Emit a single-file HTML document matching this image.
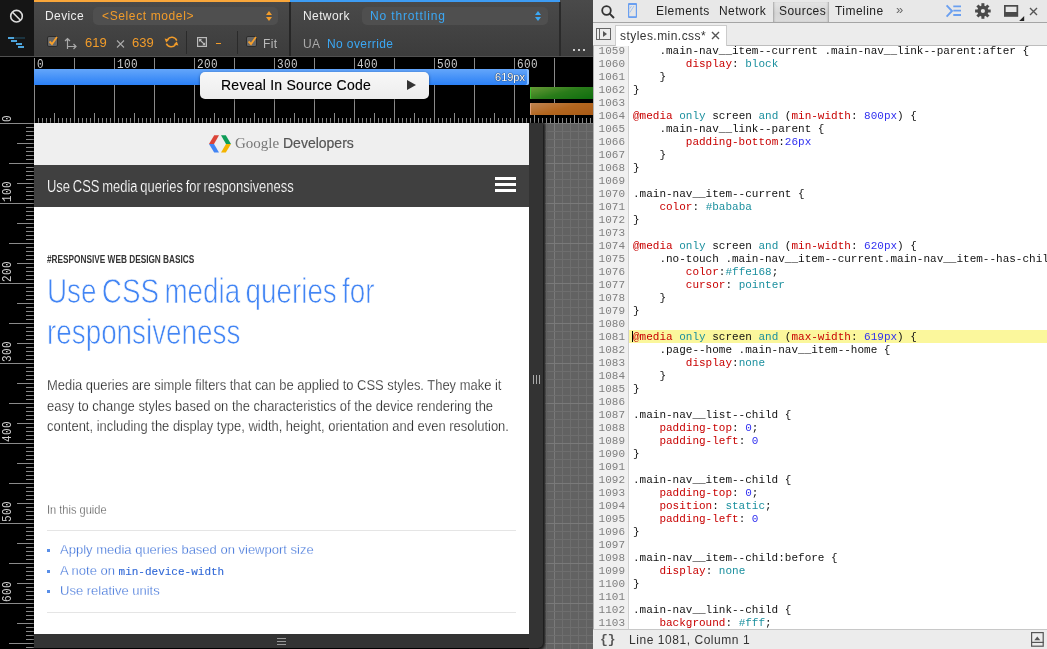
<!DOCTYPE html><html><head><meta charset="utf-8"><style>
*{box-sizing:border-box}
html,body{margin:0;padding:0}
body{width:1047px;height:649px;overflow:hidden;position:relative;background:#000;font-family:"Liberation Sans",sans-serif}
.ab{position:absolute}
.mono{font-family:"Liberation Mono",monospace}
.code{position:absolute;left:633px;font-family:"Liberation Mono",monospace;font-size:11px;line-height:13px;white-space:pre;color:#111}
.ln{position:absolute;left:593px;width:32px;text-align:right;font-family:"Liberation Mono",monospace;font-size:11px;line-height:13px;color:#7f7f7f}
.r{color:#c80000}.t{color:#1a8f9e}.b{color:#2f2ff0}
</style></head><body><div id="root" style="position:absolute;left:0;top:0;width:1047px;height:649px;will-change:transform">

<div class="ab" style="left:0;top:0;width:34px;height:56px;background:#151515"></div>
<div class="ab" style="left:34px;top:0;width:559px;height:56px;background:linear-gradient(#4a4a4a,#3c3c3c)"></div>
<div class="ab" style="left:34px;top:0;width:256px;height:2px;background:#f9a63a"></div>
<div class="ab" style="left:290px;top:0;width:270px;height:2px;background:#3d9cf4"></div>
<div class="ab" style="left:0;top:56px;width:593px;height:1px;background:#505050"></div>
<div class="ab" style="left:289px;top:2px;width:2px;height:54px;background:#262626"></div>
<div class="ab" style="left:559px;top:2px;width:2px;height:54px;background:#2a2a2a"></div>
<div class="ab" style="left:186px;top:31px;width:1px;height:23px;background:#2a2a2a"></div>
<div class="ab" style="left:237px;top:31px;width:1px;height:23px;background:#2a2a2a"></div>
<svg class="ab" style="left:0;top:0" width="34" height="56"><circle cx="16.5" cy="16.2" r="5.8" fill="none" stroke="#ddd" stroke-width="1.6"/><line x1="12.5" y1="12.2" x2="20.5" y2="20.2" stroke="#ddd" stroke-width="1.6"/><rect x="8" y="37" width="6" height="2" fill="#4ea5dc"/><rect x="14" y="37" width="11" height="2" fill="#1c3440"/><rect x="11" y="40" width="6" height="2" fill="#4ea5dc"/><rect x="16" y="43" width="6" height="2" fill="#4ea5dc"/><rect x="18" y="46" width="6" height="2" fill="#4ea5dc"/></svg>
<div class="ab" style="left:45px;top:9px;font-size:12px;line-height:14px;letter-spacing:0.4px;color:#eee">Device</div>
<div class="ab" style="left:93px;top:7px;width:185px;height:18px;border-radius:5px;background:#4f4f4f"></div>
<div class="ab" style="left:102px;top:9px;font-size:12px;line-height:14px;letter-spacing:0.4px;letter-spacing:0.62px;color:#f29c2a">&lt;Select model&gt;</div>
<svg class="ab" style="left:266px;top:11px" width="6" height="11"><path d="M3 0L6 4H0Z M0 6H6L3 10Z" fill="#f29c2a"/></svg>
<div class="ab" style="left:303px;top:9px;font-size:12px;line-height:14px;letter-spacing:0.4px;color:#eee">Network</div>
<div class="ab" style="left:362px;top:7px;width:186px;height:18px;border-radius:5px;background:#4f4f4f"></div>
<div class="ab" style="left:370px;top:9px;font-size:12px;line-height:14px;letter-spacing:0.4px;letter-spacing:0.85px;color:#3ba8f5">No throttling</div>
<svg class="ab" style="left:535px;top:11px" width="6" height="11"><path d="M3 0L6 4H0Z M0 6H6L3 10Z" fill="#3ba8f5"/></svg>
<div class="ab" style="left:303px;top:37px;font-size:12px;line-height:14px;letter-spacing:0.4px;color:#aaa">UA</div>
<div class="ab" style="left:327px;top:37px;font-size:12px;line-height:14px;letter-spacing:0.4px;color:#3ba8f5">No override</div>
<div class="ab" style="left:573px;top:49px;width:2px;height:1.5px;background:#ccc;box-shadow:5px 0 0 #ccc,10px 0 0 #ccc"></div>
<div class="ab" style="left:47px;top:36px;width:11px;height:11px;border-radius:2px;background:#666;border:1px solid #2c2c2c"></div>
<svg class="ab" style="left:47px;top:35px" width="12" height="12"><path d="M2.5 6.5L5 9L10 2" fill="none" stroke="#f7a02c" stroke-width="1.8"/></svg>
<svg class="ab" style="left:64px;top:37px" width="13" height="13"><path d="M3.5 12V1.5M1 4L3.5 1.5L6 4M3.5 9.5H12M9.5 7L12 9.5L9.5 12" fill="none" stroke="#aaa" stroke-width="1.2"/></svg>
<div class="ab" style="left:85px;top:35px;font-size:13px;line-height:15px;color:#f29c2a">619</div>
<svg class="ab" style="left:116px;top:40px" width="9" height="8"><path d="M1 0.5L8 7.5M8 0.5L1 7.5" stroke="#aaa" stroke-width="1.1"/></svg>
<div class="ab" style="left:132px;top:35px;font-size:13px;line-height:15px;color:#f29c2a">639</div>
<svg class="ab" style="left:160px;top:32px" width="24" height="20"><path d="M16.8 8.6A5.4 5.4 0 0 0 7.4 7.6M6.4 11.6A5.4 5.4 0 0 0 15.8 12.4" fill="none" stroke="#f29c2a" stroke-width="1.5"/><path d="M4.6 6.6L9.4 7.4L6.2 10.6Z M18.4 13.4L13.6 12.6L16.8 9.4Z" fill="#f29c2a"/></svg>
<svg class="ab" style="left:197px;top:37px" width="10" height="10"><rect x="0.6" y="0.6" width="8.8" height="8.8" fill="none" stroke="#bbb" stroke-width="1.2"/><path d="M2 2H5L2 5Z M8.2 8.2H5.2L8.2 5.2Z" fill="#bbb"/><path d="M3 3L7.2 7.2" stroke="#bbb" stroke-width="1.2"/></svg>
<div class="ab" style="left:216px;top:43px;width:5px;height:1px;background:#f29c2a"></div>
<div class="ab" style="left:246px;top:36px;width:11px;height:11px;border-radius:2px;background:#666;border:1px solid #2c2c2c"></div>
<svg class="ab" style="left:246px;top:35px" width="12" height="12"><path d="M2.5 6.5L5 9L10 2" fill="none" stroke="#f7a02c" stroke-width="1.8"/></svg>
<div class="ab" style="left:263px;top:37px;font-size:12px;line-height:14px;letter-spacing:0.4px;color:#bbb">Fit</div>
<svg class="ab" style="left:0;top:0" width="593" height="649" shape-rendering="crispEdges"><line x1="34.5" y1="58" x2="34.5" y2="123" stroke="#8a8a8a"/><line x1="38.5" y1="118" x2="38.5" y2="123" stroke="#8a8a8a"/><line x1="42.5" y1="118" x2="42.5" y2="123" stroke="#8a8a8a"/><line x1="46.5" y1="118" x2="46.5" y2="123" stroke="#8a8a8a"/><line x1="50.5" y1="118" x2="50.5" y2="123" stroke="#8a8a8a"/><line x1="54.5" y1="113" x2="54.5" y2="123" stroke="#8a8a8a"/><line x1="58.5" y1="118" x2="58.5" y2="123" stroke="#8a8a8a"/><line x1="62.5" y1="118" x2="62.5" y2="123" stroke="#8a8a8a"/><line x1="66.5" y1="118" x2="66.5" y2="123" stroke="#8a8a8a"/><line x1="70.5" y1="118" x2="70.5" y2="123" stroke="#8a8a8a"/><line x1="74.5" y1="58" x2="74.5" y2="123" stroke="#8a8a8a"/><line x1="78.5" y1="118" x2="78.5" y2="123" stroke="#8a8a8a"/><line x1="82.5" y1="118" x2="82.5" y2="123" stroke="#8a8a8a"/><line x1="86.5" y1="118" x2="86.5" y2="123" stroke="#8a8a8a"/><line x1="90.5" y1="118" x2="90.5" y2="123" stroke="#8a8a8a"/><line x1="94.5" y1="113" x2="94.5" y2="123" stroke="#8a8a8a"/><line x1="98.5" y1="118" x2="98.5" y2="123" stroke="#8a8a8a"/><line x1="102.5" y1="118" x2="102.5" y2="123" stroke="#8a8a8a"/><line x1="106.5" y1="118" x2="106.5" y2="123" stroke="#8a8a8a"/><line x1="110.5" y1="118" x2="110.5" y2="123" stroke="#8a8a8a"/><line x1="114.5" y1="58" x2="114.5" y2="123" stroke="#8a8a8a"/><line x1="118.5" y1="118" x2="118.5" y2="123" stroke="#8a8a8a"/><line x1="122.5" y1="118" x2="122.5" y2="123" stroke="#8a8a8a"/><line x1="126.5" y1="118" x2="126.5" y2="123" stroke="#8a8a8a"/><line x1="130.5" y1="118" x2="130.5" y2="123" stroke="#8a8a8a"/><line x1="134.5" y1="113" x2="134.5" y2="123" stroke="#8a8a8a"/><line x1="138.5" y1="118" x2="138.5" y2="123" stroke="#8a8a8a"/><line x1="142.5" y1="118" x2="142.5" y2="123" stroke="#8a8a8a"/><line x1="146.5" y1="118" x2="146.5" y2="123" stroke="#8a8a8a"/><line x1="150.5" y1="118" x2="150.5" y2="123" stroke="#8a8a8a"/><line x1="154.5" y1="58" x2="154.5" y2="123" stroke="#8a8a8a"/><line x1="158.5" y1="118" x2="158.5" y2="123" stroke="#8a8a8a"/><line x1="162.5" y1="118" x2="162.5" y2="123" stroke="#8a8a8a"/><line x1="166.5" y1="118" x2="166.5" y2="123" stroke="#8a8a8a"/><line x1="170.5" y1="118" x2="170.5" y2="123" stroke="#8a8a8a"/><line x1="174.5" y1="113" x2="174.5" y2="123" stroke="#8a8a8a"/><line x1="178.5" y1="118" x2="178.5" y2="123" stroke="#8a8a8a"/><line x1="182.5" y1="118" x2="182.5" y2="123" stroke="#8a8a8a"/><line x1="186.5" y1="118" x2="186.5" y2="123" stroke="#8a8a8a"/><line x1="190.5" y1="118" x2="190.5" y2="123" stroke="#8a8a8a"/><line x1="194.5" y1="58" x2="194.5" y2="123" stroke="#8a8a8a"/><line x1="198.5" y1="118" x2="198.5" y2="123" stroke="#8a8a8a"/><line x1="202.5" y1="118" x2="202.5" y2="123" stroke="#8a8a8a"/><line x1="206.5" y1="118" x2="206.5" y2="123" stroke="#8a8a8a"/><line x1="210.5" y1="118" x2="210.5" y2="123" stroke="#8a8a8a"/><line x1="214.5" y1="113" x2="214.5" y2="123" stroke="#8a8a8a"/><line x1="218.5" y1="118" x2="218.5" y2="123" stroke="#8a8a8a"/><line x1="222.5" y1="118" x2="222.5" y2="123" stroke="#8a8a8a"/><line x1="226.5" y1="118" x2="226.5" y2="123" stroke="#8a8a8a"/><line x1="230.5" y1="118" x2="230.5" y2="123" stroke="#8a8a8a"/><line x1="234.5" y1="58" x2="234.5" y2="123" stroke="#8a8a8a"/><line x1="238.5" y1="118" x2="238.5" y2="123" stroke="#8a8a8a"/><line x1="242.5" y1="118" x2="242.5" y2="123" stroke="#8a8a8a"/><line x1="246.5" y1="118" x2="246.5" y2="123" stroke="#8a8a8a"/><line x1="250.5" y1="118" x2="250.5" y2="123" stroke="#8a8a8a"/><line x1="254.5" y1="113" x2="254.5" y2="123" stroke="#8a8a8a"/><line x1="258.5" y1="118" x2="258.5" y2="123" stroke="#8a8a8a"/><line x1="262.5" y1="118" x2="262.5" y2="123" stroke="#8a8a8a"/><line x1="266.5" y1="118" x2="266.5" y2="123" stroke="#8a8a8a"/><line x1="270.5" y1="118" x2="270.5" y2="123" stroke="#8a8a8a"/><line x1="274.5" y1="58" x2="274.5" y2="123" stroke="#8a8a8a"/><line x1="278.5" y1="118" x2="278.5" y2="123" stroke="#8a8a8a"/><line x1="282.5" y1="118" x2="282.5" y2="123" stroke="#8a8a8a"/><line x1="286.5" y1="118" x2="286.5" y2="123" stroke="#8a8a8a"/><line x1="290.5" y1="118" x2="290.5" y2="123" stroke="#8a8a8a"/><line x1="294.5" y1="113" x2="294.5" y2="123" stroke="#8a8a8a"/><line x1="298.5" y1="118" x2="298.5" y2="123" stroke="#8a8a8a"/><line x1="302.5" y1="118" x2="302.5" y2="123" stroke="#8a8a8a"/><line x1="306.5" y1="118" x2="306.5" y2="123" stroke="#8a8a8a"/><line x1="310.5" y1="118" x2="310.5" y2="123" stroke="#8a8a8a"/><line x1="314.5" y1="58" x2="314.5" y2="123" stroke="#8a8a8a"/><line x1="318.5" y1="118" x2="318.5" y2="123" stroke="#8a8a8a"/><line x1="322.5" y1="118" x2="322.5" y2="123" stroke="#8a8a8a"/><line x1="326.5" y1="118" x2="326.5" y2="123" stroke="#8a8a8a"/><line x1="330.5" y1="118" x2="330.5" y2="123" stroke="#8a8a8a"/><line x1="334.5" y1="113" x2="334.5" y2="123" stroke="#8a8a8a"/><line x1="338.5" y1="118" x2="338.5" y2="123" stroke="#8a8a8a"/><line x1="342.5" y1="118" x2="342.5" y2="123" stroke="#8a8a8a"/><line x1="346.5" y1="118" x2="346.5" y2="123" stroke="#8a8a8a"/><line x1="350.5" y1="118" x2="350.5" y2="123" stroke="#8a8a8a"/><line x1="354.5" y1="58" x2="354.5" y2="123" stroke="#8a8a8a"/><line x1="358.5" y1="118" x2="358.5" y2="123" stroke="#8a8a8a"/><line x1="362.5" y1="118" x2="362.5" y2="123" stroke="#8a8a8a"/><line x1="366.5" y1="118" x2="366.5" y2="123" stroke="#8a8a8a"/><line x1="370.5" y1="118" x2="370.5" y2="123" stroke="#8a8a8a"/><line x1="374.5" y1="113" x2="374.5" y2="123" stroke="#8a8a8a"/><line x1="378.5" y1="118" x2="378.5" y2="123" stroke="#8a8a8a"/><line x1="382.5" y1="118" x2="382.5" y2="123" stroke="#8a8a8a"/><line x1="386.5" y1="118" x2="386.5" y2="123" stroke="#8a8a8a"/><line x1="390.5" y1="118" x2="390.5" y2="123" stroke="#8a8a8a"/><line x1="394.5" y1="58" x2="394.5" y2="123" stroke="#8a8a8a"/><line x1="398.5" y1="118" x2="398.5" y2="123" stroke="#8a8a8a"/><line x1="402.5" y1="118" x2="402.5" y2="123" stroke="#8a8a8a"/><line x1="406.5" y1="118" x2="406.5" y2="123" stroke="#8a8a8a"/><line x1="410.5" y1="118" x2="410.5" y2="123" stroke="#8a8a8a"/><line x1="414.5" y1="113" x2="414.5" y2="123" stroke="#8a8a8a"/><line x1="418.5" y1="118" x2="418.5" y2="123" stroke="#8a8a8a"/><line x1="422.5" y1="118" x2="422.5" y2="123" stroke="#8a8a8a"/><line x1="426.5" y1="118" x2="426.5" y2="123" stroke="#8a8a8a"/><line x1="430.5" y1="118" x2="430.5" y2="123" stroke="#8a8a8a"/><line x1="434.5" y1="58" x2="434.5" y2="123" stroke="#8a8a8a"/><line x1="438.5" y1="118" x2="438.5" y2="123" stroke="#8a8a8a"/><line x1="442.5" y1="118" x2="442.5" y2="123" stroke="#8a8a8a"/><line x1="446.5" y1="118" x2="446.5" y2="123" stroke="#8a8a8a"/><line x1="450.5" y1="118" x2="450.5" y2="123" stroke="#8a8a8a"/><line x1="454.5" y1="113" x2="454.5" y2="123" stroke="#8a8a8a"/><line x1="458.5" y1="118" x2="458.5" y2="123" stroke="#8a8a8a"/><line x1="462.5" y1="118" x2="462.5" y2="123" stroke="#8a8a8a"/><line x1="466.5" y1="118" x2="466.5" y2="123" stroke="#8a8a8a"/><line x1="470.5" y1="118" x2="470.5" y2="123" stroke="#8a8a8a"/><line x1="474.5" y1="58" x2="474.5" y2="123" stroke="#8a8a8a"/><line x1="478.5" y1="118" x2="478.5" y2="123" stroke="#8a8a8a"/><line x1="482.5" y1="118" x2="482.5" y2="123" stroke="#8a8a8a"/><line x1="486.5" y1="118" x2="486.5" y2="123" stroke="#8a8a8a"/><line x1="490.5" y1="118" x2="490.5" y2="123" stroke="#8a8a8a"/><line x1="494.5" y1="113" x2="494.5" y2="123" stroke="#8a8a8a"/><line x1="498.5" y1="118" x2="498.5" y2="123" stroke="#8a8a8a"/><line x1="502.5" y1="118" x2="502.5" y2="123" stroke="#8a8a8a"/><line x1="506.5" y1="118" x2="506.5" y2="123" stroke="#8a8a8a"/><line x1="510.5" y1="118" x2="510.5" y2="123" stroke="#8a8a8a"/><line x1="514.5" y1="58" x2="514.5" y2="123" stroke="#8a8a8a"/><line x1="518.5" y1="118" x2="518.5" y2="123" stroke="#8a8a8a"/><line x1="522.5" y1="118" x2="522.5" y2="123" stroke="#8a8a8a"/><line x1="526.5" y1="118" x2="526.5" y2="123" stroke="#8a8a8a"/><line x1="530.5" y1="118" x2="530.5" y2="123" stroke="#8a8a8a"/><line x1="534.5" y1="113" x2="534.5" y2="123" stroke="#8a8a8a"/><line x1="538.5" y1="118" x2="538.5" y2="123" stroke="#8a8a8a"/><line x1="542.5" y1="118" x2="542.5" y2="123" stroke="#8a8a8a"/><line x1="546.5" y1="118" x2="546.5" y2="123" stroke="#8a8a8a"/><line x1="550.5" y1="118" x2="550.5" y2="123" stroke="#8a8a8a"/><line x1="554.5" y1="58" x2="554.5" y2="123" stroke="#8a8a8a"/><line x1="558.5" y1="118" x2="558.5" y2="123" stroke="#8a8a8a"/><line x1="562.5" y1="118" x2="562.5" y2="123" stroke="#8a8a8a"/><line x1="566.5" y1="118" x2="566.5" y2="123" stroke="#8a8a8a"/><line x1="570.5" y1="118" x2="570.5" y2="123" stroke="#8a8a8a"/><line x1="574.5" y1="113" x2="574.5" y2="123" stroke="#8a8a8a"/><line x1="578.5" y1="118" x2="578.5" y2="123" stroke="#8a8a8a"/><line x1="582.5" y1="118" x2="582.5" y2="123" stroke="#8a8a8a"/><line x1="586.5" y1="118" x2="586.5" y2="123" stroke="#8a8a8a"/><line x1="590.5" y1="118" x2="590.5" y2="123" stroke="#8a8a8a"/><line x1="0" y1="123.5" x2="34" y2="123.5" stroke="#8a8a8a"/><line x1="26" y1="127.5" x2="34" y2="127.5" stroke="#8a8a8a"/><line x1="26" y1="131.5" x2="34" y2="131.5" stroke="#8a8a8a"/><line x1="26" y1="135.5" x2="34" y2="135.5" stroke="#8a8a8a"/><line x1="26" y1="139.5" x2="34" y2="139.5" stroke="#8a8a8a"/><line x1="17" y1="143.5" x2="34" y2="143.5" stroke="#8a8a8a"/><line x1="26" y1="147.5" x2="34" y2="147.5" stroke="#8a8a8a"/><line x1="26" y1="151.5" x2="34" y2="151.5" stroke="#8a8a8a"/><line x1="26" y1="155.5" x2="34" y2="155.5" stroke="#8a8a8a"/><line x1="26" y1="159.5" x2="34" y2="159.5" stroke="#8a8a8a"/><line x1="9" y1="163.5" x2="34" y2="163.5" stroke="#8a8a8a"/><line x1="26" y1="167.5" x2="34" y2="167.5" stroke="#8a8a8a"/><line x1="26" y1="171.5" x2="34" y2="171.5" stroke="#8a8a8a"/><line x1="26" y1="175.5" x2="34" y2="175.5" stroke="#8a8a8a"/><line x1="26" y1="179.5" x2="34" y2="179.5" stroke="#8a8a8a"/><line x1="17" y1="183.5" x2="34" y2="183.5" stroke="#8a8a8a"/><line x1="26" y1="187.5" x2="34" y2="187.5" stroke="#8a8a8a"/><line x1="26" y1="191.5" x2="34" y2="191.5" stroke="#8a8a8a"/><line x1="26" y1="195.5" x2="34" y2="195.5" stroke="#8a8a8a"/><line x1="26" y1="199.5" x2="34" y2="199.5" stroke="#8a8a8a"/><line x1="0" y1="203.5" x2="34" y2="203.5" stroke="#8a8a8a"/><line x1="26" y1="207.5" x2="34" y2="207.5" stroke="#8a8a8a"/><line x1="26" y1="211.5" x2="34" y2="211.5" stroke="#8a8a8a"/><line x1="26" y1="215.5" x2="34" y2="215.5" stroke="#8a8a8a"/><line x1="26" y1="219.5" x2="34" y2="219.5" stroke="#8a8a8a"/><line x1="17" y1="223.5" x2="34" y2="223.5" stroke="#8a8a8a"/><line x1="26" y1="227.5" x2="34" y2="227.5" stroke="#8a8a8a"/><line x1="26" y1="231.5" x2="34" y2="231.5" stroke="#8a8a8a"/><line x1="26" y1="235.5" x2="34" y2="235.5" stroke="#8a8a8a"/><line x1="26" y1="239.5" x2="34" y2="239.5" stroke="#8a8a8a"/><line x1="9" y1="243.5" x2="34" y2="243.5" stroke="#8a8a8a"/><line x1="26" y1="247.5" x2="34" y2="247.5" stroke="#8a8a8a"/><line x1="26" y1="251.5" x2="34" y2="251.5" stroke="#8a8a8a"/><line x1="26" y1="255.5" x2="34" y2="255.5" stroke="#8a8a8a"/><line x1="26" y1="259.5" x2="34" y2="259.5" stroke="#8a8a8a"/><line x1="17" y1="263.5" x2="34" y2="263.5" stroke="#8a8a8a"/><line x1="26" y1="267.5" x2="34" y2="267.5" stroke="#8a8a8a"/><line x1="26" y1="271.5" x2="34" y2="271.5" stroke="#8a8a8a"/><line x1="26" y1="275.5" x2="34" y2="275.5" stroke="#8a8a8a"/><line x1="26" y1="279.5" x2="34" y2="279.5" stroke="#8a8a8a"/><line x1="0" y1="283.5" x2="34" y2="283.5" stroke="#8a8a8a"/><line x1="26" y1="287.5" x2="34" y2="287.5" stroke="#8a8a8a"/><line x1="26" y1="291.5" x2="34" y2="291.5" stroke="#8a8a8a"/><line x1="26" y1="295.5" x2="34" y2="295.5" stroke="#8a8a8a"/><line x1="26" y1="299.5" x2="34" y2="299.5" stroke="#8a8a8a"/><line x1="17" y1="303.5" x2="34" y2="303.5" stroke="#8a8a8a"/><line x1="26" y1="307.5" x2="34" y2="307.5" stroke="#8a8a8a"/><line x1="26" y1="311.5" x2="34" y2="311.5" stroke="#8a8a8a"/><line x1="26" y1="315.5" x2="34" y2="315.5" stroke="#8a8a8a"/><line x1="26" y1="319.5" x2="34" y2="319.5" stroke="#8a8a8a"/><line x1="9" y1="323.5" x2="34" y2="323.5" stroke="#8a8a8a"/><line x1="26" y1="327.5" x2="34" y2="327.5" stroke="#8a8a8a"/><line x1="26" y1="331.5" x2="34" y2="331.5" stroke="#8a8a8a"/><line x1="26" y1="335.5" x2="34" y2="335.5" stroke="#8a8a8a"/><line x1="26" y1="339.5" x2="34" y2="339.5" stroke="#8a8a8a"/><line x1="17" y1="343.5" x2="34" y2="343.5" stroke="#8a8a8a"/><line x1="26" y1="347.5" x2="34" y2="347.5" stroke="#8a8a8a"/><line x1="26" y1="351.5" x2="34" y2="351.5" stroke="#8a8a8a"/><line x1="26" y1="355.5" x2="34" y2="355.5" stroke="#8a8a8a"/><line x1="26" y1="359.5" x2="34" y2="359.5" stroke="#8a8a8a"/><line x1="0" y1="363.5" x2="34" y2="363.5" stroke="#8a8a8a"/><line x1="26" y1="367.5" x2="34" y2="367.5" stroke="#8a8a8a"/><line x1="26" y1="371.5" x2="34" y2="371.5" stroke="#8a8a8a"/><line x1="26" y1="375.5" x2="34" y2="375.5" stroke="#8a8a8a"/><line x1="26" y1="379.5" x2="34" y2="379.5" stroke="#8a8a8a"/><line x1="17" y1="383.5" x2="34" y2="383.5" stroke="#8a8a8a"/><line x1="26" y1="387.5" x2="34" y2="387.5" stroke="#8a8a8a"/><line x1="26" y1="391.5" x2="34" y2="391.5" stroke="#8a8a8a"/><line x1="26" y1="395.5" x2="34" y2="395.5" stroke="#8a8a8a"/><line x1="26" y1="399.5" x2="34" y2="399.5" stroke="#8a8a8a"/><line x1="9" y1="403.5" x2="34" y2="403.5" stroke="#8a8a8a"/><line x1="26" y1="407.5" x2="34" y2="407.5" stroke="#8a8a8a"/><line x1="26" y1="411.5" x2="34" y2="411.5" stroke="#8a8a8a"/><line x1="26" y1="415.5" x2="34" y2="415.5" stroke="#8a8a8a"/><line x1="26" y1="419.5" x2="34" y2="419.5" stroke="#8a8a8a"/><line x1="17" y1="423.5" x2="34" y2="423.5" stroke="#8a8a8a"/><line x1="26" y1="427.5" x2="34" y2="427.5" stroke="#8a8a8a"/><line x1="26" y1="431.5" x2="34" y2="431.5" stroke="#8a8a8a"/><line x1="26" y1="435.5" x2="34" y2="435.5" stroke="#8a8a8a"/><line x1="26" y1="439.5" x2="34" y2="439.5" stroke="#8a8a8a"/><line x1="0" y1="443.5" x2="34" y2="443.5" stroke="#8a8a8a"/><line x1="26" y1="447.5" x2="34" y2="447.5" stroke="#8a8a8a"/><line x1="26" y1="451.5" x2="34" y2="451.5" stroke="#8a8a8a"/><line x1="26" y1="455.5" x2="34" y2="455.5" stroke="#8a8a8a"/><line x1="26" y1="459.5" x2="34" y2="459.5" stroke="#8a8a8a"/><line x1="17" y1="463.5" x2="34" y2="463.5" stroke="#8a8a8a"/><line x1="26" y1="467.5" x2="34" y2="467.5" stroke="#8a8a8a"/><line x1="26" y1="471.5" x2="34" y2="471.5" stroke="#8a8a8a"/><line x1="26" y1="475.5" x2="34" y2="475.5" stroke="#8a8a8a"/><line x1="26" y1="479.5" x2="34" y2="479.5" stroke="#8a8a8a"/><line x1="9" y1="483.5" x2="34" y2="483.5" stroke="#8a8a8a"/><line x1="26" y1="487.5" x2="34" y2="487.5" stroke="#8a8a8a"/><line x1="26" y1="491.5" x2="34" y2="491.5" stroke="#8a8a8a"/><line x1="26" y1="495.5" x2="34" y2="495.5" stroke="#8a8a8a"/><line x1="26" y1="499.5" x2="34" y2="499.5" stroke="#8a8a8a"/><line x1="17" y1="503.5" x2="34" y2="503.5" stroke="#8a8a8a"/><line x1="26" y1="507.5" x2="34" y2="507.5" stroke="#8a8a8a"/><line x1="26" y1="511.5" x2="34" y2="511.5" stroke="#8a8a8a"/><line x1="26" y1="515.5" x2="34" y2="515.5" stroke="#8a8a8a"/><line x1="26" y1="519.5" x2="34" y2="519.5" stroke="#8a8a8a"/><line x1="0" y1="523.5" x2="34" y2="523.5" stroke="#8a8a8a"/><line x1="26" y1="527.5" x2="34" y2="527.5" stroke="#8a8a8a"/><line x1="26" y1="531.5" x2="34" y2="531.5" stroke="#8a8a8a"/><line x1="26" y1="535.5" x2="34" y2="535.5" stroke="#8a8a8a"/><line x1="26" y1="539.5" x2="34" y2="539.5" stroke="#8a8a8a"/><line x1="17" y1="543.5" x2="34" y2="543.5" stroke="#8a8a8a"/><line x1="26" y1="547.5" x2="34" y2="547.5" stroke="#8a8a8a"/><line x1="26" y1="551.5" x2="34" y2="551.5" stroke="#8a8a8a"/><line x1="26" y1="555.5" x2="34" y2="555.5" stroke="#8a8a8a"/><line x1="26" y1="559.5" x2="34" y2="559.5" stroke="#8a8a8a"/><line x1="9" y1="563.5" x2="34" y2="563.5" stroke="#8a8a8a"/><line x1="26" y1="567.5" x2="34" y2="567.5" stroke="#8a8a8a"/><line x1="26" y1="571.5" x2="34" y2="571.5" stroke="#8a8a8a"/><line x1="26" y1="575.5" x2="34" y2="575.5" stroke="#8a8a8a"/><line x1="26" y1="579.5" x2="34" y2="579.5" stroke="#8a8a8a"/><line x1="17" y1="583.5" x2="34" y2="583.5" stroke="#8a8a8a"/><line x1="26" y1="587.5" x2="34" y2="587.5" stroke="#8a8a8a"/><line x1="26" y1="591.5" x2="34" y2="591.5" stroke="#8a8a8a"/><line x1="26" y1="595.5" x2="34" y2="595.5" stroke="#8a8a8a"/><line x1="26" y1="599.5" x2="34" y2="599.5" stroke="#8a8a8a"/><line x1="0" y1="603.5" x2="34" y2="603.5" stroke="#8a8a8a"/><line x1="26" y1="607.5" x2="34" y2="607.5" stroke="#8a8a8a"/><line x1="26" y1="611.5" x2="34" y2="611.5" stroke="#8a8a8a"/><line x1="26" y1="615.5" x2="34" y2="615.5" stroke="#8a8a8a"/><line x1="26" y1="619.5" x2="34" y2="619.5" stroke="#8a8a8a"/><line x1="17" y1="623.5" x2="34" y2="623.5" stroke="#8a8a8a"/><line x1="26" y1="627.5" x2="34" y2="627.5" stroke="#8a8a8a"/><line x1="26" y1="631.5" x2="34" y2="631.5" stroke="#8a8a8a"/><line x1="26" y1="635.5" x2="34" y2="635.5" stroke="#8a8a8a"/><line x1="26" y1="639.5" x2="34" y2="639.5" stroke="#8a8a8a"/><line x1="9" y1="643.5" x2="34" y2="643.5" stroke="#8a8a8a"/><line x1="26" y1="647.5" x2="34" y2="647.5" stroke="#8a8a8a"/></svg>
<div class="ab" style="left:37px;top:57px;font-family:'Liberation Mono',monospace;font-size:11px;line-height:13px;letter-spacing:0.4px;color:#ccc;transform-origin:0 0;transform:scaleY(1.2)">0</div>
<div class="ab" style="left:117px;top:57px;font-family:'Liberation Mono',monospace;font-size:11px;line-height:13px;letter-spacing:0.4px;color:#ccc;transform-origin:0 0;transform:scaleY(1.2)">100</div>
<div class="ab" style="left:197px;top:57px;font-family:'Liberation Mono',monospace;font-size:11px;line-height:13px;letter-spacing:0.4px;color:#ccc;transform-origin:0 0;transform:scaleY(1.2)">200</div>
<div class="ab" style="left:277px;top:57px;font-family:'Liberation Mono',monospace;font-size:11px;line-height:13px;letter-spacing:0.4px;color:#ccc;transform-origin:0 0;transform:scaleY(1.2)">300</div>
<div class="ab" style="left:357px;top:57px;font-family:'Liberation Mono',monospace;font-size:11px;line-height:13px;letter-spacing:0.4px;color:#ccc;transform-origin:0 0;transform:scaleY(1.2)">400</div>
<div class="ab" style="left:437px;top:57px;font-family:'Liberation Mono',monospace;font-size:11px;line-height:13px;letter-spacing:0.4px;color:#ccc;transform-origin:0 0;transform:scaleY(1.2)">500</div>
<div class="ab" style="left:517px;top:57px;font-family:'Liberation Mono',monospace;font-size:11px;line-height:13px;letter-spacing:0.4px;color:#ccc;transform-origin:0 0;transform:scaleY(1.2)">600</div>
<div class="ab" style="left:0;top:122px;width:11px;height:0;"><div style="position:absolute;left:0;top:0;transform-origin:0 0;transform:rotate(-90deg) scaleY(1.2);font-family:'Liberation Mono',monospace;font-size:11px;line-height:13px;letter-spacing:0.4px;color:#ccc;white-space:nowrap">0</div></div>
<div class="ab" style="left:0;top:202px;width:11px;height:0;"><div style="position:absolute;left:0;top:0;transform-origin:0 0;transform:rotate(-90deg) scaleY(1.2);font-family:'Liberation Mono',monospace;font-size:11px;line-height:13px;letter-spacing:0.4px;color:#ccc;white-space:nowrap">100</div></div>
<div class="ab" style="left:0;top:282px;width:11px;height:0;"><div style="position:absolute;left:0;top:0;transform-origin:0 0;transform:rotate(-90deg) scaleY(1.2);font-family:'Liberation Mono',monospace;font-size:11px;line-height:13px;letter-spacing:0.4px;color:#ccc;white-space:nowrap">200</div></div>
<div class="ab" style="left:0;top:362px;width:11px;height:0;"><div style="position:absolute;left:0;top:0;transform-origin:0 0;transform:rotate(-90deg) scaleY(1.2);font-family:'Liberation Mono',monospace;font-size:11px;line-height:13px;letter-spacing:0.4px;color:#ccc;white-space:nowrap">300</div></div>
<div class="ab" style="left:0;top:442px;width:11px;height:0;"><div style="position:absolute;left:0;top:0;transform-origin:0 0;transform:rotate(-90deg) scaleY(1.2);font-family:'Liberation Mono',monospace;font-size:11px;line-height:13px;letter-spacing:0.4px;color:#ccc;white-space:nowrap">400</div></div>
<div class="ab" style="left:0;top:522px;width:11px;height:0;"><div style="position:absolute;left:0;top:0;transform-origin:0 0;transform:rotate(-90deg) scaleY(1.2);font-family:'Liberation Mono',monospace;font-size:11px;line-height:13px;letter-spacing:0.4px;color:#ccc;white-space:nowrap">500</div></div>
<div class="ab" style="left:0;top:602px;width:11px;height:0;"><div style="position:absolute;left:0;top:0;transform-origin:0 0;transform:rotate(-90deg) scaleY(1.2);font-family:'Liberation Mono',monospace;font-size:11px;line-height:13px;letter-spacing:0.4px;color:#ccc;white-space:nowrap">600</div></div>
<div class="ab" style="left:34px;top:69px;width:495px;height:16px;background:linear-gradient(#64a6fa,#2b80f6);border-radius:0 2px 2px 0;box-shadow:inset -2px 0 0 #8cc0ff"></div>
<div class="ab" style="left:470px;top:71px;width:55px;text-align:right;font-size:11px;line-height:13px;color:#fff;text-shadow:0 0 1px #123,0 0 1px #123">619px</div>
<div class="ab" style="left:530px;top:87px;width:63px;height:12px;background:linear-gradient(165deg,#6a9a38,#2a7c1a 50%,#0e6e0e);border-radius:1px 0 0 1px;box-shadow:inset 1px 0 0 #40c030"></div>
<div class="ab" style="left:530px;top:103px;width:63px;height:12px;background:linear-gradient(165deg,#c08552,#b3661f 50%,#a85a16);border-radius:1px 0 0 1px;box-shadow:inset 1px 0 0 #e2a27a"></div>
<div class="ab" style="left:200px;top:72px;width:229px;height:27px;border-radius:5px;background:linear-gradient(#f8f8f8,#ececec);box-shadow:0 1px 3px rgba(0,0,0,.5)"></div>
<div class="ab" style="left:221px;top:77px;font-size:14px;line-height:16px;letter-spacing:0.25px;color:#000;-webkit-text-stroke:0.15px #000">Reveal In Source Code</div>
<svg class="ab" style="left:407px;top:80px" width="9" height="10"><path d="M0 0L9 5L0 10Z" fill="#333"/></svg>
<svg class="ab" style="left:529px;top:123px" width="64" height="526" shape-rendering="crispEdges"><rect x="0" y="0" width="64" height="526" fill="#626262"/><line x1="17.5" y1="0" x2="17.5" y2="526" stroke="#6e6e6e"/><line x1="25.5" y1="0" x2="25.5" y2="526" stroke="#7a7a7a"/><line x1="33.5" y1="0" x2="33.5" y2="526" stroke="#6e6e6e"/><line x1="41.5" y1="0" x2="41.5" y2="526" stroke="#6e6e6e"/><line x1="49.5" y1="0" x2="49.5" y2="526" stroke="#6e6e6e"/><line x1="57.5" y1="0" x2="57.5" y2="526" stroke="#6e6e6e"/><line x1="16" y1="0.5" x2="64" y2="0.5" stroke="#7a7a7a"/><line x1="16" y1="8.5" x2="64" y2="8.5" stroke="#6e6e6e"/><line x1="16" y1="16.5" x2="64" y2="16.5" stroke="#6e6e6e"/><line x1="16" y1="24.5" x2="64" y2="24.5" stroke="#6e6e6e"/><line x1="16" y1="32.5" x2="64" y2="32.5" stroke="#6e6e6e"/><line x1="16" y1="40.5" x2="64" y2="40.5" stroke="#7a7a7a"/><line x1="16" y1="48.5" x2="64" y2="48.5" stroke="#6e6e6e"/><line x1="16" y1="56.5" x2="64" y2="56.5" stroke="#6e6e6e"/><line x1="16" y1="64.5" x2="64" y2="64.5" stroke="#6e6e6e"/><line x1="16" y1="72.5" x2="64" y2="72.5" stroke="#6e6e6e"/><line x1="16" y1="80.5" x2="64" y2="80.5" stroke="#7a7a7a"/><line x1="16" y1="88.5" x2="64" y2="88.5" stroke="#6e6e6e"/><line x1="16" y1="96.5" x2="64" y2="96.5" stroke="#6e6e6e"/><line x1="16" y1="104.5" x2="64" y2="104.5" stroke="#6e6e6e"/><line x1="16" y1="112.5" x2="64" y2="112.5" stroke="#6e6e6e"/><line x1="16" y1="120.5" x2="64" y2="120.5" stroke="#7a7a7a"/><line x1="16" y1="128.5" x2="64" y2="128.5" stroke="#6e6e6e"/><line x1="16" y1="136.5" x2="64" y2="136.5" stroke="#6e6e6e"/><line x1="16" y1="144.5" x2="64" y2="144.5" stroke="#6e6e6e"/><line x1="16" y1="152.5" x2="64" y2="152.5" stroke="#6e6e6e"/><line x1="16" y1="160.5" x2="64" y2="160.5" stroke="#7a7a7a"/><line x1="16" y1="168.5" x2="64" y2="168.5" stroke="#6e6e6e"/><line x1="16" y1="176.5" x2="64" y2="176.5" stroke="#6e6e6e"/><line x1="16" y1="184.5" x2="64" y2="184.5" stroke="#6e6e6e"/><line x1="16" y1="192.5" x2="64" y2="192.5" stroke="#6e6e6e"/><line x1="16" y1="200.5" x2="64" y2="200.5" stroke="#7a7a7a"/><line x1="16" y1="208.5" x2="64" y2="208.5" stroke="#6e6e6e"/><line x1="16" y1="216.5" x2="64" y2="216.5" stroke="#6e6e6e"/><line x1="16" y1="224.5" x2="64" y2="224.5" stroke="#6e6e6e"/><line x1="16" y1="232.5" x2="64" y2="232.5" stroke="#6e6e6e"/><line x1="16" y1="240.5" x2="64" y2="240.5" stroke="#7a7a7a"/><line x1="16" y1="248.5" x2="64" y2="248.5" stroke="#6e6e6e"/><line x1="16" y1="256.5" x2="64" y2="256.5" stroke="#6e6e6e"/><line x1="16" y1="264.5" x2="64" y2="264.5" stroke="#6e6e6e"/><line x1="16" y1="272.5" x2="64" y2="272.5" stroke="#6e6e6e"/><line x1="16" y1="280.5" x2="64" y2="280.5" stroke="#7a7a7a"/><line x1="16" y1="288.5" x2="64" y2="288.5" stroke="#6e6e6e"/><line x1="16" y1="296.5" x2="64" y2="296.5" stroke="#6e6e6e"/><line x1="16" y1="304.5" x2="64" y2="304.5" stroke="#6e6e6e"/><line x1="16" y1="312.5" x2="64" y2="312.5" stroke="#6e6e6e"/><line x1="16" y1="320.5" x2="64" y2="320.5" stroke="#7a7a7a"/><line x1="16" y1="328.5" x2="64" y2="328.5" stroke="#6e6e6e"/><line x1="16" y1="336.5" x2="64" y2="336.5" stroke="#6e6e6e"/><line x1="16" y1="344.5" x2="64" y2="344.5" stroke="#6e6e6e"/><line x1="16" y1="352.5" x2="64" y2="352.5" stroke="#6e6e6e"/><line x1="16" y1="360.5" x2="64" y2="360.5" stroke="#7a7a7a"/><line x1="16" y1="368.5" x2="64" y2="368.5" stroke="#6e6e6e"/><line x1="16" y1="376.5" x2="64" y2="376.5" stroke="#6e6e6e"/><line x1="16" y1="384.5" x2="64" y2="384.5" stroke="#6e6e6e"/><line x1="16" y1="392.5" x2="64" y2="392.5" stroke="#6e6e6e"/><line x1="16" y1="400.5" x2="64" y2="400.5" stroke="#7a7a7a"/><line x1="16" y1="408.5" x2="64" y2="408.5" stroke="#6e6e6e"/><line x1="16" y1="416.5" x2="64" y2="416.5" stroke="#6e6e6e"/><line x1="16" y1="424.5" x2="64" y2="424.5" stroke="#6e6e6e"/><line x1="16" y1="432.5" x2="64" y2="432.5" stroke="#6e6e6e"/><line x1="16" y1="440.5" x2="64" y2="440.5" stroke="#7a7a7a"/><line x1="16" y1="448.5" x2="64" y2="448.5" stroke="#6e6e6e"/><line x1="16" y1="456.5" x2="64" y2="456.5" stroke="#6e6e6e"/><line x1="16" y1="464.5" x2="64" y2="464.5" stroke="#6e6e6e"/><line x1="16" y1="472.5" x2="64" y2="472.5" stroke="#6e6e6e"/><line x1="16" y1="480.5" x2="64" y2="480.5" stroke="#7a7a7a"/><line x1="16" y1="488.5" x2="64" y2="488.5" stroke="#6e6e6e"/><line x1="16" y1="496.5" x2="64" y2="496.5" stroke="#6e6e6e"/><line x1="16" y1="504.5" x2="64" y2="504.5" stroke="#6e6e6e"/><line x1="16" y1="512.5" x2="64" y2="512.5" stroke="#6e6e6e"/><line x1="16" y1="520.5" x2="64" y2="520.5" stroke="#7a7a7a"/></svg>
<div class="ab" style="left:34px;top:123px;width:509px;height:525px;background:#333;border-radius:0 0 5px 0;box-shadow:1px 1px 3px 1px rgba(0,0,0,.8)"></div>
<div class="ab" style="left:277px;top:638px;width:9px;height:1px;background:#999;box-shadow:0 3px 0 #999,0 6px 0 #999"></div>
<div class="ab" style="left:533px;top:375px;width:1px;height:9px;background:#aaa;box-shadow:3px 0 0 #aaa,6px 0 0 #aaa"></div>
<div class="ab" style="left:34px;top:123px;width:495px;height:511px;background:#fff;overflow:hidden">
<div class="ab" style="left:0;top:0;width:495px;height:42px;background:#efefef"></div>
<svg class="ab" style="left:170px;top:7px" width="32" height="28"><path d="M10.2 5.2H15L10 14H5Z" fill="#db4437"/><path d="M5 14H10L15 22.6H10.2Z" fill="#4285f4"/><path d="M17 5.2H21.8L27 14H22Z" fill="#0f9d58"/><path d="M22 14H27L21.8 22.6H17Z" fill="#f4b400"/></svg>
<div class="ab" style="left:201px;top:12px;font-family:'Liberation Serif',serif;font-size:15px;line-height:17px;color:#777">Google</div>
<div class="ab" style="left:249px;top:12px;font-size:14px;line-height:17px;color:#555;-webkit-text-stroke:0.2px #555">Developers</div>
<div class="ab" style="left:0;top:42px;width:495px;height:42px;background:#404040"></div>
<div class="ab" style="left:13px;top:55px;font-size:16px;line-height:18px;word-spacing:-1px;color:#fff;-webkit-text-stroke:0.2px #404040;transform-origin:0 0;transform:scaleX(0.81);white-space:nowrap">Use CSS media queries for responsiveness</div>
<div class="ab" style="left:461px;top:54px;width:21px;height:3px;background:#fff;box-shadow:0 6px 0 #fff,0 12px 0 #fff"></div>
<div class="ab" style="left:13px;top:131px;font-size:10px;line-height:12px;font-weight:bold;color:#333;transform-origin:0 0;transform:scaleX(0.826);white-space:nowrap">#RESPONSIVE WEB DESIGN BASICS</div>
<div class="ab" style="left:13px;top:147px;font-size:35px;line-height:41.2px;word-spacing:-3px;color:#4285f4;-webkit-text-stroke:0.75px #fff;transform-origin:0 0;transform:scaleX(0.795);white-space:nowrap">Use CSS media queries for<br>responsiveness</div>
<div class="ab" style="left:13px;top:251.00px;font-size:15.5px;line-height:21px;color:#222;-webkit-text-stroke:0.25px #fff;transform-origin:0 0;transform:scaleX(0.835);white-space:nowrap">Media queries are simple filters that can be applied to CSS styles. They make it</div>
<div class="ab" style="left:13px;top:271.65px;font-size:15.5px;line-height:21px;color:#222;-webkit-text-stroke:0.25px #fff;transform-origin:0 0;transform:scaleX(0.835);white-space:nowrap">easy to change styles based on the characteristics of the device rendering the</div>
<div class="ab" style="left:13px;top:292.30px;font-size:15.5px;line-height:21px;color:#222;-webkit-text-stroke:0.25px #fff;transform-origin:0 0;transform:scaleX(0.835);white-space:nowrap">content, including the display type, width, height, orientation and even resolution.</div>
<div class="ab" style="left:13px;top:380px;font-size:12px;line-height:14px;color:#333;-webkit-text-stroke:0.35px #fff;transform-origin:0 0;transform:scaleX(0.92);white-space:nowrap">In this guide</div>
<div class="ab" style="left:13px;top:407px;width:469px;height:1px;background:#e5e5e5"></div>
<div class="ab" style="left:13px;top:426.0px;width:3px;height:3px;background:#5a8fe8"></div>
<div class="ab" style="left:26px;top:419.0px;font-size:13px;line-height:15px;color:#2f67d6;-webkit-text-stroke:0.3px #fff;white-space:nowrap">Apply media queries based on viewport size</div>
<div class="ab" style="left:13px;top:446.5px;width:3px;height:3px;background:#5a8fe8"></div>
<div class="ab" style="left:26px;top:439.5px;font-size:13px;line-height:15px;color:#2f67d6;-webkit-text-stroke:0.3px #fff;white-space:nowrap">A note on <span style="font-family:'Liberation Mono',monospace;font-size:11px;-webkit-text-stroke:0.1px #2f67d6">min-device-width</span></div>
<div class="ab" style="left:13px;top:467.0px;width:3px;height:3px;background:#5a8fe8"></div>
<div class="ab" style="left:26px;top:460.0px;font-size:13px;line-height:15px;color:#2f67d6;-webkit-text-stroke:0.3px #fff;white-space:nowrap">Use relative units</div>
<div class="ab" style="left:13px;top:489px;width:469px;height:1px;background:#e5e5e5"></div>
</div>
<div class="ab" style="left:593px;top:0;width:454px;height:649px;background:#fff"></div>
<div class="ab" style="left:593px;top:0;width:454px;height:23px;background:#e8e8e8;border-bottom:1px solid #a5a5a5"></div>
<div class="ab" style="left:593px;top:23px;width:454px;height:23px;background:#ececec;border-bottom:1px solid #bdbdbd"></div>
<svg class="ab" style="left:601px;top:5px" width="15" height="15"><circle cx="5.5" cy="5.5" r="4.3" fill="none" stroke="#333" stroke-width="1.8"/><path d="M8.6 8.6L13 13" stroke="#333" stroke-width="2"/></svg>
<svg class="ab" style="left:628px;top:3px" width="9" height="15"><rect x="0" y="0" width="9" height="15" rx="1" fill="#6a9ff0"/><rect x="1.2" y="2" width="6.6" height="11.2" fill="#e6e6e6"/><path d="M1.8 9.5L6 3M1.8 5.5L3.5 3" stroke="#9cbff2" stroke-width="0.9"/></svg>
<div class="ab" style="left:656px;top:4px;font-size:12px;line-height:14px;letter-spacing:0.45px;color:#222">Elements</div>
<div class="ab" style="left:719px;top:4px;font-size:12px;line-height:14px;letter-spacing:0.45px;color:#222">Network</div>
<div class="ab" style="left:773px;top:2px;width:56px;height:20px;background:linear-gradient(#e4e4e4,#d6d6d6 55%,#dbdbdb);box-shadow:inset 2px 0 2px -1px rgba(0,0,0,.25),inset -2px 0 2px -1px rgba(0,0,0,.25)"></div>
<div class="ab" style="left:779px;top:4px;font-size:12px;line-height:14px;letter-spacing:0.45px;color:#222">Sources</div>
<div class="ab" style="left:835px;top:4px;font-size:12px;line-height:14px;letter-spacing:0.45px;color:#222">Timeline</div>
<div class="ab" style="left:896px;top:3px;font-size:13px;line-height:14px;color:#666">&#187;</div>
<svg class="ab" style="left:945px;top:4px" width="18" height="14"><path d="M1.6 1.4L7 7L1.6 12.6" fill="none" stroke="#6a9ff0" stroke-width="1.9"/><path d="M8.3 2.4H16M8.3 6.7H16M8.3 11H16" stroke="#6a9ff0" stroke-width="1.8"/></svg>
<svg class="ab" style="left:975px;top:3px" width="16" height="16"><g transform="translate(7.9 8)" fill="#4a4a4a"><circle r="5.5"/><rect x="-1.5" y="-7.8" width="3" height="4" transform="rotate(0)"/><rect x="-1.5" y="-7.8" width="3" height="4" transform="rotate(45)"/><rect x="-1.5" y="-7.8" width="3" height="4" transform="rotate(90)"/><rect x="-1.5" y="-7.8" width="3" height="4" transform="rotate(135)"/><rect x="-1.5" y="-7.8" width="3" height="4" transform="rotate(180)"/><rect x="-1.5" y="-7.8" width="3" height="4" transform="rotate(225)"/><rect x="-1.5" y="-7.8" width="3" height="4" transform="rotate(270)"/><rect x="-1.5" y="-7.8" width="3" height="4" transform="rotate(315)"/><circle r="2.1" fill="#e8e8e8"/></g></svg>
<svg class="ab" style="left:1004px;top:5px" width="21" height="17"><rect x="0" y="0" width="14.2" height="11.8" fill="#4a4a4a"/><rect x="1.7" y="1.7" width="10.8" height="5.3" fill="#e8e8e8"/><path d="M20.2 11V16H15.2Z" fill="#222"/></svg>
<svg class="ab" style="left:1029px;top:7px" width="9" height="9"><path d="M1 1L8 8M8 1L1 8" stroke="#555" stroke-width="1.4"/></svg>
<svg class="ab" style="left:596px;top:28px" width="16" height="13"><rect x="0.5" y="0.5" width="14" height="11" fill="none" stroke="#666"/><line x1="3.5" y1="0.5" x2="3.5" y2="11.5" stroke="#666"/><path d="M7 3L11 6L7 9Z" fill="#555"/></svg>
<div class="ab" style="left:615px;top:25px;width:112px;height:21px;background:#fff;border:1px solid #ccc;border-bottom:none"></div>
<div class="ab" style="left:620px;top:29px;font-size:12px;line-height:14px;letter-spacing:0.45px;color:#333">styles.min.css*</div>
<svg class="ab" style="left:711px;top:31px" width="9" height="9"><path d="M1 1L8 8M8 1L1 8" stroke="#555" stroke-width="1.4"/></svg>
<div class="ab" style="left:593px;top:46px;width:36px;height:583px;background:#f0f0f0;border-right:1px solid #d0d0d0"></div>
<div class="ab" style="left:593px;top:46px;width:1px;height:583px;background:#b0b0b0"></div>
<div class="ab" style="left:629px;top:330px;width:418px;height:13px;background:#fbf79c"></div>
<div class="ab" style="left:593px;top:46px;width:454px;height:583px;overflow:hidden">
<div class="ln" style="left:0;top:-1px">1059</div>
<div class="code" style="left:40px;top:-1px">    .main-nav__item--current .main-nav__link--parent:after {</div>
<div class="ln" style="left:0;top:12px">1060</div>
<div class="code" style="left:40px;top:12px">        <span class="r">display</span>: <span class="t">block</span></div>
<div class="ln" style="left:0;top:25px">1061</div>
<div class="code" style="left:40px;top:25px">    }</div>
<div class="ln" style="left:0;top:38px">1062</div>
<div class="code" style="left:40px;top:38px">}</div>
<div class="ln" style="left:0;top:51px">1063</div>
<div class="code" style="left:40px;top:51px"></div>
<div class="ln" style="left:0;top:64px">1064</div>
<div class="code" style="left:40px;top:64px"><span class="r">@media</span> <span class="t">only</span> screen <span class="t">and</span> (<span class="r">min-width</span>: <span class="b">800px</span>) {</div>
<div class="ln" style="left:0;top:77px">1065</div>
<div class="code" style="left:40px;top:77px">    .main-nav__link--parent {</div>
<div class="ln" style="left:0;top:90px">1066</div>
<div class="code" style="left:40px;top:90px">        <span class="r">padding-bottom</span>:<span class="b">26px</span></div>
<div class="ln" style="left:0;top:103px">1067</div>
<div class="code" style="left:40px;top:103px">    }</div>
<div class="ln" style="left:0;top:116px">1068</div>
<div class="code" style="left:40px;top:116px">}</div>
<div class="ln" style="left:0;top:129px">1069</div>
<div class="code" style="left:40px;top:129px"></div>
<div class="ln" style="left:0;top:142px">1070</div>
<div class="code" style="left:40px;top:142px">.main-nav__item--current {</div>
<div class="ln" style="left:0;top:155px">1071</div>
<div class="code" style="left:40px;top:155px">    <span class="r">color</span>: <span class="t">#bababa</span></div>
<div class="ln" style="left:0;top:168px">1072</div>
<div class="code" style="left:40px;top:168px">}</div>
<div class="ln" style="left:0;top:181px">1073</div>
<div class="code" style="left:40px;top:181px"></div>
<div class="ln" style="left:0;top:194px">1074</div>
<div class="code" style="left:40px;top:194px"><span class="r">@media</span> <span class="t">only</span> screen <span class="t">and</span> (<span class="r">min-width</span>: <span class="b">620px</span>) {</div>
<div class="ln" style="left:0;top:207px">1075</div>
<div class="code" style="left:40px;top:207px">    .no-touch .main-nav__item--current.main-nav__item--has-child {</div>
<div class="ln" style="left:0;top:220px">1076</div>
<div class="code" style="left:40px;top:220px">        <span class="r">color</span>:<span class="t">#ffe168</span>;</div>
<div class="ln" style="left:0;top:233px">1077</div>
<div class="code" style="left:40px;top:233px">        <span class="r">cursor</span>: <span class="t">pointer</span></div>
<div class="ln" style="left:0;top:246px">1078</div>
<div class="code" style="left:40px;top:246px">    }</div>
<div class="ln" style="left:0;top:259px">1079</div>
<div class="code" style="left:40px;top:259px">}</div>
<div class="ln" style="left:0;top:272px">1080</div>
<div class="code" style="left:40px;top:272px"></div>
<div class="ln" style="left:0;top:285px">1081</div>
<div class="code" style="left:40px;top:285px"><span class="r">@media</span> <span class="t">only</span> screen <span class="t">and</span> (<span class="r">max-width</span>: <span class="b">619px</span>) {</div>
<div class="ln" style="left:0;top:298px">1082</div>
<div class="code" style="left:40px;top:298px">    .page--home .main-nav__item--home {</div>
<div class="ln" style="left:0;top:311px">1083</div>
<div class="code" style="left:40px;top:311px">        <span class="r">display</span>:<span class="t">none</span></div>
<div class="ln" style="left:0;top:324px">1084</div>
<div class="code" style="left:40px;top:324px">    }</div>
<div class="ln" style="left:0;top:337px">1085</div>
<div class="code" style="left:40px;top:337px">}</div>
<div class="ln" style="left:0;top:350px">1086</div>
<div class="code" style="left:40px;top:350px"></div>
<div class="ln" style="left:0;top:363px">1087</div>
<div class="code" style="left:40px;top:363px">.main-nav__list--child {</div>
<div class="ln" style="left:0;top:376px">1088</div>
<div class="code" style="left:40px;top:376px">    <span class="r">padding-top</span>: <span class="b">0</span>;</div>
<div class="ln" style="left:0;top:389px">1089</div>
<div class="code" style="left:40px;top:389px">    <span class="r">padding-left</span>: <span class="b">0</span></div>
<div class="ln" style="left:0;top:402px">1090</div>
<div class="code" style="left:40px;top:402px">}</div>
<div class="ln" style="left:0;top:415px">1091</div>
<div class="code" style="left:40px;top:415px"></div>
<div class="ln" style="left:0;top:428px">1092</div>
<div class="code" style="left:40px;top:428px">.main-nav__item--child {</div>
<div class="ln" style="left:0;top:441px">1093</div>
<div class="code" style="left:40px;top:441px">    <span class="r">padding-top</span>: <span class="b">0</span>;</div>
<div class="ln" style="left:0;top:454px">1094</div>
<div class="code" style="left:40px;top:454px">    <span class="r">position</span>: <span class="t">static</span>;</div>
<div class="ln" style="left:0;top:467px">1095</div>
<div class="code" style="left:40px;top:467px">    <span class="r">padding-left</span>: <span class="b">0</span></div>
<div class="ln" style="left:0;top:480px">1096</div>
<div class="code" style="left:40px;top:480px">}</div>
<div class="ln" style="left:0;top:493px">1097</div>
<div class="code" style="left:40px;top:493px"></div>
<div class="ln" style="left:0;top:506px">1098</div>
<div class="code" style="left:40px;top:506px">.main-nav__item--child:before {</div>
<div class="ln" style="left:0;top:519px">1099</div>
<div class="code" style="left:40px;top:519px">    <span class="r">display</span>: <span class="t">none</span></div>
<div class="ln" style="left:0;top:532px">1100</div>
<div class="code" style="left:40px;top:532px">}</div>
<div class="ln" style="left:0;top:545px">1101</div>
<div class="code" style="left:40px;top:545px"></div>
<div class="ln" style="left:0;top:558px">1102</div>
<div class="code" style="left:40px;top:558px">.main-nav__link--child {</div>
<div class="ln" style="left:0;top:571px">1103</div>
<div class="code" style="left:40px;top:571px">    <span class="r">background</span>: <span class="t">#fff</span>;</div>
<div class="ab" style="left:39px;top:285px;width:1px;height:11px;background:#000"></div>
</div>
<div class="ab" style="left:593px;top:629px;width:454px;height:20px;background:#ececec;border-top:1px solid #c8c8c8"></div>
<div class="ab" style="left:600px;top:632px;font-family:'Liberation Mono',monospace;font-size:13px;line-height:15px;font-weight:bold;color:#555">{}</div>
<div class="ab" style="left:629px;top:633px;font-size:12px;line-height:14px;letter-spacing:0.55px;color:#333">Line 1081, Column 1</div>
<svg class="ab" style="left:1031px;top:632px" width="14" height="15"><rect x="0.6" y="0.6" width="11.6" height="13.6" fill="none" stroke="#555" stroke-width="1.2"/><line x1="0" y1="10.4" x2="12.8" y2="10.4" stroke="#555" stroke-width="1.2"/><path d="M3.3 8.2H9.3L6.3 4.4Z" fill="#555"/></svg>
</div></body></html>
